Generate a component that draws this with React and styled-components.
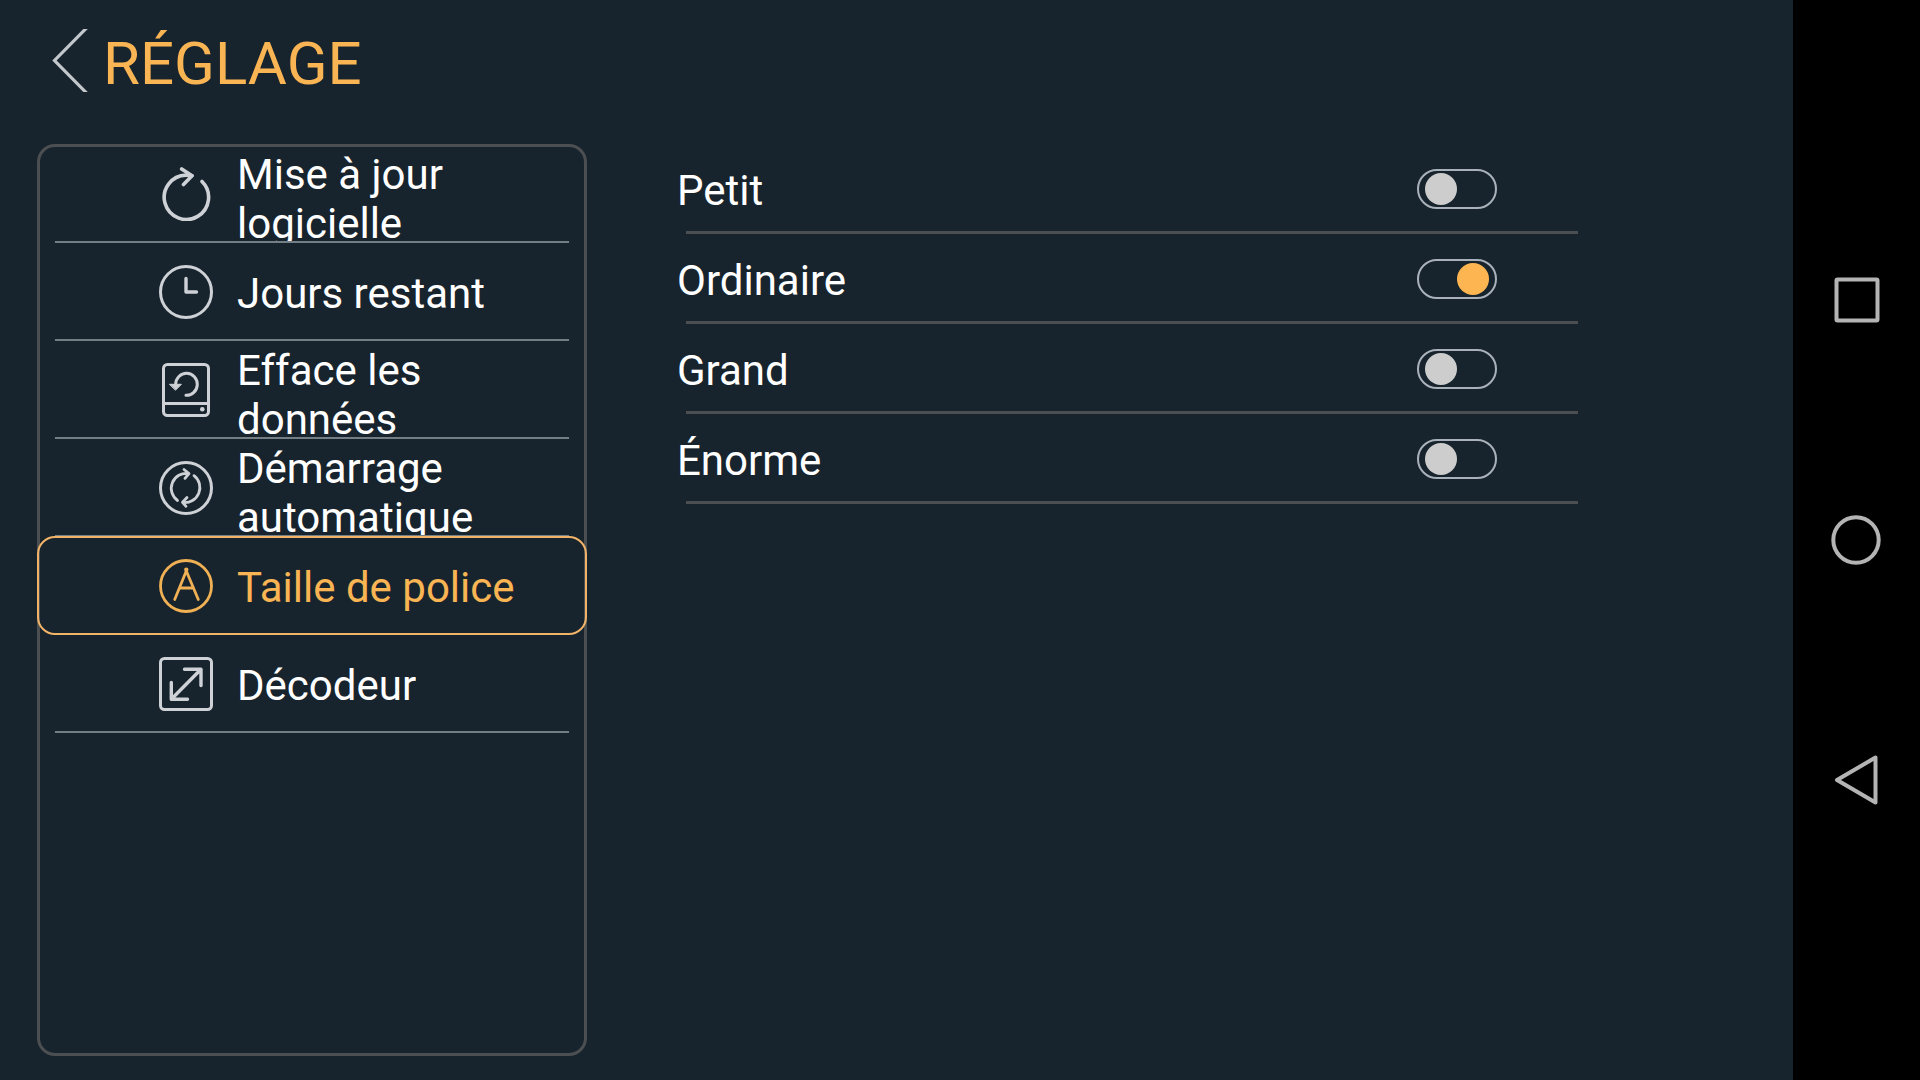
import React, { useState } from 'react'
import styled, { createGlobalStyle } from 'styled-components'

const GlobalStyle = createGlobalStyle`
  * {
    box-sizing: border-box;
  }
  body {
    margin: 0;
    background: #18242d;
    font-family: Roboto, "Noto Sans", sans-serif;
  }
`;

const Page = styled.div`
  display: flex;
  min-height: 100vh;
  color: #fff;
`;

const Screen = styled.main`
  flex: 1;
  min-width: 0;
  display: flex;
  flex-direction: column;
`;

const Header = styled.header`
  display: flex;
  align-items: flex-start;
  gap: 15px;
  height: 144px;
  padding: 29px 52px 0;
`;

const BackButton = styled.button`
  display: flex;
  padding: 0;
  border: none;
  background: none;
  color: #c3c8cd;
  cursor: pointer;
`;

const Title = styled.h1`
  margin: 0;
  font-size: 60px;
  font-weight: 400;
  line-height: 70px;
  color: #f9b453;
`;

const Content = styled.div`
  flex: 1;
  display: grid;
  grid-template-columns: minmax(0, 550fr) minmax(0, 901fr);
  column-gap: 90px;
  padding: 0 215px 24px 37px;
`;

/* the frame is an inset shadow so that the selected entry can cover it */
const Menu = styled.nav`
  padding-top: 1px;
  border-radius: 18px;
  box-shadow: inset 0 0 0 3px #4b4f52;
`;

const MenuItem = styled.button`
  position: relative;
  display: flex;
  align-items: center;
  gap: 24px;
  width: 100%;
  height: 98px;
  padding: 0 18px 0 122px;
  border: none;
  background: none;
  font: inherit;
  text-align: left;
  color: ${({ $active }) => ($active ? '#f9b453' : '#fff')};
  cursor: pointer;

  &::after {
    content: '';
    position: absolute;
    inset: ${({ $active }) => ($active ? '-1px 0 0' : 'auto 18px 0')};
    height: ${({ $active }) => ($active ? 'auto' : '2px')};
    border: ${({ $active }) => ($active ? '2px solid #f0b368' : 'none')};
    border-radius: ${({ $active }) => ($active ? '18px' : '0')};
    background: ${({ $active }) => ($active ? 'none' : '#737e85')};
  }
`;

const MenuIcon = styled.svg`
  flex: none;
  width: 54px;
  height: 54px;
  fill: none;
  stroke: ${({ $active }) => ($active ? '#f0b155' : '#ced2d7')};
  stroke-width: 3;
  stroke-linecap: round;
  stroke-linejoin: round;
`;

const MenuLabel = styled.span`
  max-height: 96px;
  padding-top: 5px;
  margin-bottom: 2px;
  overflow: hidden;
  font-size: 42px;
  line-height: 49px;
`;

const Options = styled.div`
  display: flex;
  flex-direction: column;
`;

const Option = styled.label`
  display: flex;
  align-items: center;
  justify-content: space-between;
  height: 90px;
  padding-right: 81px;
  position: relative;
  cursor: pointer;

  &::after {
    content: '';
    position: absolute;
    inset: auto 0 0 9px;
    height: 3px;
    background: #4b4f52;
  }
`;

const OptionText = styled.span`
  padding-top: 2px;
  font-size: 42px;
  line-height: 49px;
`;

const Switch = styled.input`
  appearance: none;
  display: flex;
  align-items: center;
  justify-content: ${({ checked }) => (checked ? 'flex-end' : 'flex-start')};
  width: 80px;
  height: 40px;
  margin: 0;
  padding: 0 6px;
  border: 2px solid #a9b2ba;
  border-radius: 20px;
  cursor: pointer;

  &::before {
    content: '';
    width: 32px;
    height: 32px;
    border-radius: 50%;
    background: ${({ checked }) => (checked ? '#fdb552' : '#cdcdcd')};
  }
`;

const SystemBar = styled.aside`
  display: flex;
  flex-direction: column;
  align-items: center;
  justify-content: center;
  gap: 190px;
  width: 127px;
  padding-right: 1px;
  background: #000;
`;

const SystemButton = styled.button`
  display: flex;
  padding: 0;
  border: none;
  background: none;
  cursor: pointer;

  svg {
    width: 50px;
    height: 50px;
    fill: none;
    stroke: #b4b4b4;
    stroke-width: 4;
    stroke-linejoin: round;
  }
`;

const menu = [
  {
    id: 'update',
    label: 'Mise à jour logicielle',
    icon: (
      <>
        <path strokeWidth="3.6" d="M43 14.5A22.2 22.2 0 1 1 27 8.1Q30 8 33 8.7" />
        <path strokeWidth="3.6" d="M22.7 2L33 8.7L24.5 17.5" />
      </>
    ),
  },
  {
    id: 'days',
    label: 'Jours restant',
    icon: (
      <>
        <circle cx="27" cy="27" r="25.5" />
        <path strokeWidth="3.4" d="M27 13.5V27H37.5" />
      </>
    ),
  },
  {
    id: 'erase',
    label: 'Efface les données',
    icon: (
      <>
        <rect x="4.5" y="1.5" width="45" height="51" rx="4" />
        <path d="M4.500 40.500H49.500" />
        <circle cx="43.3" cy="46.3" r="2.3" fill="#ced2d7" stroke="none" />
        <path d="M16.7 21.3A10.8 11 0 1 1 27 32.3" />
        <path d="M10.8 21.3H22.4L16.7 27Z" fill="#ced2d7" strokeWidth="1" />
      </>
    ),
  },
  {
    id: 'autostart',
    label: 'Démarrage automatique',
    icon: (
      <>
        <circle cx="27" cy="27" r="25.5" />
        <path strokeWidth="2.8" d="M18.5 39.5A15 15 0 0 1 29.5 12.5M25 8.5L30 12.5L26 17.3" />
        <path strokeWidth="2.8" d="M35 14.7A15 15 0 0 1 24 41.5M28 36.5L23.5 41.3L27 45.3" />
      </>
    ),
  },
  {
    id: 'font',
    label: 'Taille de police',
    icon: (
      <>
        <circle cx="27" cy="27" r="25.5" strokeWidth="2.8" />
        <circle cx="27.3" cy="10.6" r="1.2" strokeWidth="2" />
        <path strokeWidth="2.8" d="M15.7 40.500L27.3 12L39.3 40.500M20.500 29H34.500" />
      </>
    ),
  },
  {
    id: 'decoder',
    label: 'Décodeur',
    icon: (
      <>
        <rect x="1.5" y="1.5" width="51" height="51" rx="4" />
        <path strokeWidth="3.4" d="M12.3 42.2L42 12.3M25.5 12.3H42V28.5M12.3 25.5V42.2H28.5" />
      </>
    ),
  },
];

const sizes = ['Petit', 'Ordinaire', 'Grand', 'Énorme'];

export default function App() {
  const [page, setPage] = useState('font');
  const [size, setSize] = useState('Ordinaire');

  return (
    <Page>
      <GlobalStyle />
      <Screen>
        <Header>
          <BackButton type="button" aria-label="Retour">
            <svg width="36" height="63" viewBox="0 0 36 63" fill="none" stroke="currentColor" strokeWidth="3.2">
              <path d="M36.500 -3L2.500 31.500L36.500 66" />
            </svg>
          </BackButton>
          <Title>RÉGLAGE</Title>
        </Header>
        <Content>
          <Menu>
            {menu.map((item) => (
              <MenuItem
                key={item.id}
                type="button"
                $active={item.id === page}
                onClick={() => setPage(item.id)}
              >
                <MenuIcon viewBox="0 0 54 54" $active={item.id === page} aria-hidden="true">
                  {item.icon}
                </MenuIcon>
                <MenuLabel>{item.label}</MenuLabel>
              </MenuItem>
            ))}
          </Menu>
          <Options>
            {sizes.map((name) => (
              <Option key={name}>
                <OptionText>{name}</OptionText>
                <Switch
                  type="radio"
                  name="size"
                  value={name}
                  checked={name === size}
                  onChange={() => setSize(name)}
                />
              </Option>
            ))}
          </Options>
        </Content>
      </Screen>
      <SystemBar>
        <SystemButton type="button" aria-label="Applications récentes">
          <svg viewBox="0 0 50 50"><rect x="5.5" y="4.5" width="41" height="41" rx="1" /></svg>
        </SystemButton>
        <SystemButton type="button" aria-label="Accueil">
          <svg viewBox="0 0 50 50"><circle cx="25" cy="25" r="22.7" /></svg>
        </SystemButton>
        <SystemButton type="button" aria-label="Précédent">
          <svg viewBox="0 0 50 50"><path d="M6 25L44.500 2.500V47.500Z" /></svg>
        </SystemButton>
      </SystemBar>
    </Page>
  )
}
